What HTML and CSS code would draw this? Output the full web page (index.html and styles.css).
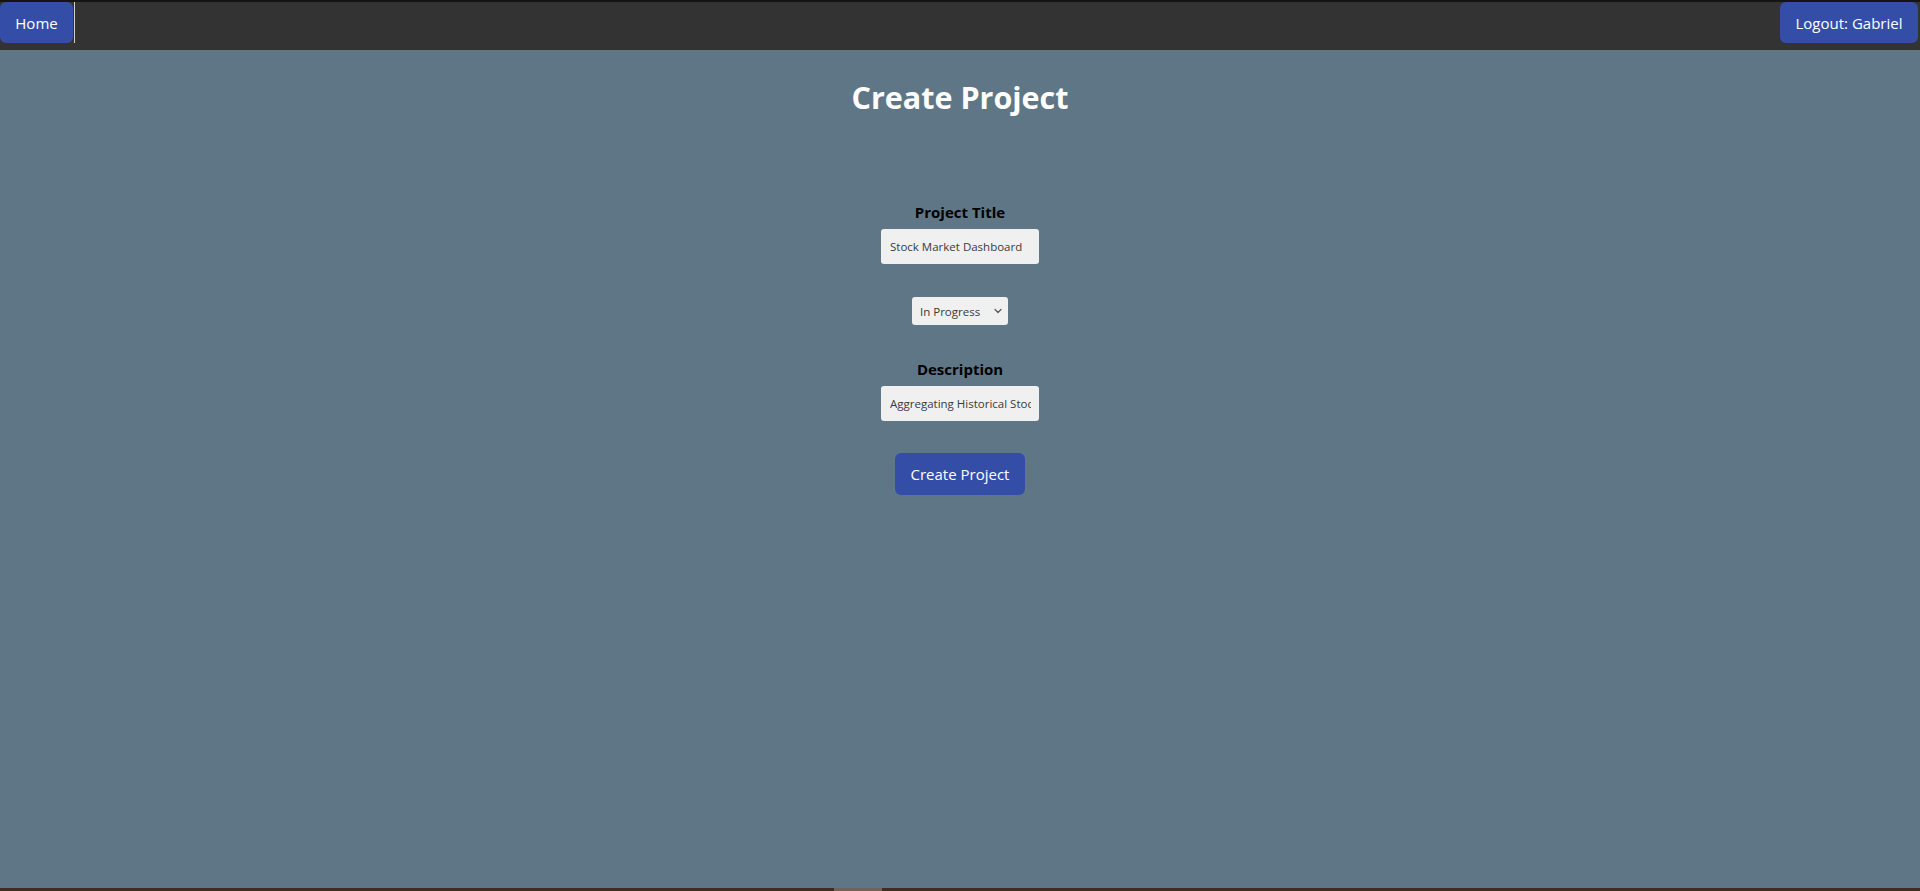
FILE: index.html
```html
<!DOCTYPE html>
<html lang="en">
<head>
<meta charset="utf-8">
<title>Create Project</title>
<link rel="stylesheet" href="styles.css">
</head>
<body>
<nav class="navbar">
  <div class="nav-left">
    <a class="nav-btn home-btn" href="#">Home</a>
    <span class="nav-sep"></span>
  </div>
  <a class="nav-btn logout-btn" href="#">Logout: Gabriel</a>
</nav>
<main class="page">
  <h1 class="page-title">Create Project</h1>
  <form class="project-form">
    <div class="field">
      <label class="field-label" for="title">Project Title</label>
      <input class="field-input" id="title" type="text" value="Stock Market Dashboard">
    </div>
    <div class="select-wrap">
      <select class="status-select">
        <option>In Progress</option>
        <option>Completed</option>
        <option>Not Started</option>
      </select>
      <svg class="select-chevron" width="8" height="6" viewBox="0 0 8 6" aria-hidden="true">
        <path d="M1 1.5 L4 4.5 L7 1.5" fill="none" stroke="#555555" stroke-width="1.2" stroke-linecap="round" stroke-linejoin="round"/>
      </svg>
    </div>
    <div class="field">
      <label class="field-label" for="desc">Description</label>
      <input class="field-input" id="desc" type="text" value="Aggregating Historical Stock Data">
    </div>
    <button class="submit-btn" type="button">Create Project</button>
  </form>
</main>
<div class="bottom-strip"><span class="strip-thumb"></span></div>
</body>
</html>
```

FILE: styles.css
```css
* { box-sizing: border-box; }
html, body { height: 100%; }
body {
  margin: 0;
  display: flex;
  flex-direction: column;
  background: #5f7686;
  font-family: "Open Sans", "Noto Sans", sans-serif;
  overflow: hidden;
}
.navbar {
  height: 50px;
  flex: none;
  background: #333333;
  border-top: 2px solid #141414;
  display: flex;
  justify-content: space-between;
  align-items: flex-start;
}
.nav-left {
  display: flex;
  align-items: stretch;
  height: 41px;
}
.nav-btn {
  height: 41px;
  display: flex;
  align-items: center;
  justify-content: center;
  background: #344ea8;
  color: #ffffff;
  text-decoration: none;
  font-size: 15px;
  border-radius: 6px;
}
.home-btn { width: 73px; }
.nav-sep {
  width: 1px;
  margin-left: 1px;
  background: #cfcfcf;
}
.logout-btn {
  width: 138px;
  margin-right: 2px;
}
.page {
  flex: 1;
  display: flex;
  flex-direction: column;
  align-items: center;
}
.page-title {
  margin: 27px 0 0;
  font-size: 30.5px;
  line-height: 40px;
  font-weight: 700;
  color: #ffffff;
}
.project-form {
  margin-top: 85px;
  display: flex;
  flex-direction: column;
  align-items: center;
  gap: 33px;
}
.field {
  display: flex;
  flex-direction: column;
  align-items: center;
  gap: 7px;
}
.field-label {
  font-size: 15px;
  line-height: 20px;
  font-weight: 700;
  color: #000000;
}
.field-input {
  width: 158px;
  height: 35px;
  border: none;
  border-radius: 3px;
  background: #f0f0f0;
  padding: 0 8px 0 9px;
  font-family: "Open Sans", sans-serif;
  font-size: 11.5px;
  color: #3a3a3a;
  outline: none;
}
.select-wrap {
  position: relative;
  width: 96px;
  height: 28px;
  margin-bottom: 1px;
}
.status-select {
  appearance: none;
  -webkit-appearance: none;
  width: 96px;
  height: 28px;
  border: none;
  border-radius: 3px;
  background: #f0f0f0;
  padding: 0 18px 0 8px;
  font-family: "Open Sans", sans-serif;
  font-size: 11.5px;
  color: #3a3a3a;
  outline: none;
}
.select-chevron {
  position: absolute;
  right: 6px;
  top: 11px;
  pointer-events: none;
}
.submit-btn {
  width: 130px;
  height: 42px;
  border: none;
  border-radius: 6px;
  background: #344ea8;
  color: #ffffff;
  font-family: "Open Sans", sans-serif;
  font-size: 15px;
  margin-top: -1px;
}
.bottom-strip {
  flex: none;
  height: 3px;
  background: #3d2d25;
  display: flex;
  padding-left: 834px;
}
.strip-thumb {
  width: 48px;
  background: #6f635b;
}
```
